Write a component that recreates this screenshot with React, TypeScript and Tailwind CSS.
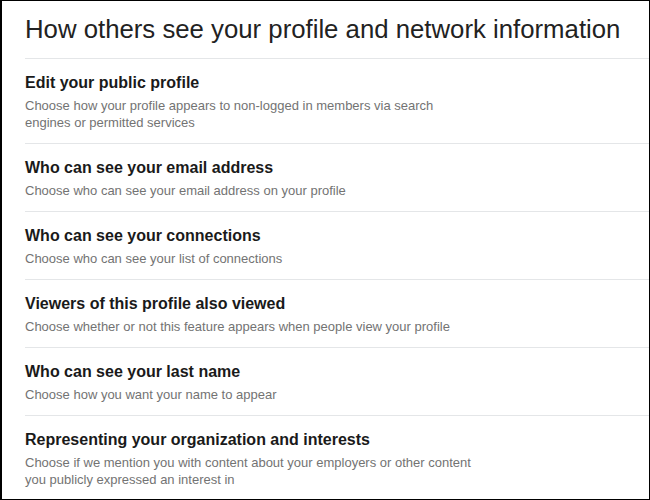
const settings = [
  {
    title: "Edit your public profile",
    desc: "Choose how your profile appears to non-logged in members via search engines or permitted services",
  },
  {
    title: "Who can see your email address",
    desc: "Choose who can see your email address on your profile",
  },
  {
    title: "Who can see your connections",
    desc: "Choose who can see your list of connections",
  },
  {
    title: "Viewers of this profile also viewed",
    desc: "Choose whether or not this feature appears when people view your profile",
  },
  {
    title: "Who can see your last name",
    desc: "Choose how you want your name to appear",
  },
  {
    title: "Representing your organization and interests",
    desc: "Choose if we mention you with content about your employers or other content you publicly expressed an interest in",
  },
];

export default function App() {
  return (
    <div className="w-[650px] h-[500px] overflow-hidden bg-white border border-black border-l-2 font-['Liberation_Sans',Arial,sans-serif]">
      <h1 className="pl-[23px] pt-[11px] pb-[12px] text-[25.75px] leading-[34px] font-normal text-[#222]">
        How others see your profile and network information
      </h1>
      <ul className="ml-[23px]">
        {settings.map((s) => (
          <li
            key={s.title}
            className="border-t border-[#e4e6e8] pt-[14px] pb-[12px]"
          >
            <h2 className="text-[16px] leading-[20px] font-bold text-[#1a1a1a]">
              {s.title}
            </h2>
            <p className="mt-[4px] max-w-[448px] text-[13px] leading-[17px] text-[#737373]">
              {s.desc}
            </p>
          </li>
        ))}
      </ul>
    </div>
  );
}
